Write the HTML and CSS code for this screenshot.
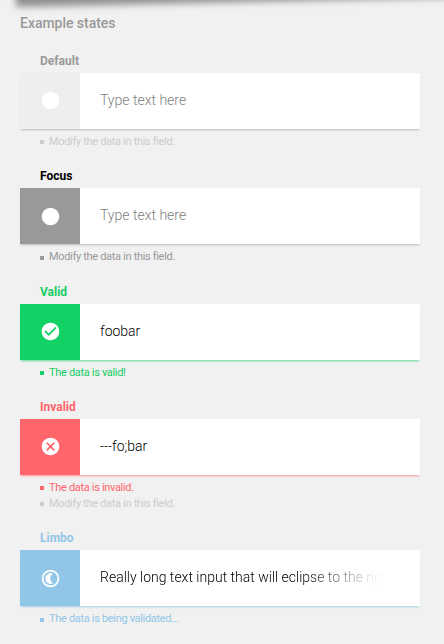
FILE: index.html
```html
<!DOCTYPE html>
<html lang="en">
<head>
<meta charset="utf-8">
<title>Example states</title>
<link rel="stylesheet" href="styles.css">
</head>
<body>
<div class="shadow-clip"><div class="top-shadow"></div></div>
<main class="states">
  <h1 class="title">Example states</h1>

  <section class="group default">
    <label class="label">Default</label>
    <div class="field">
      <div class="status"><svg class="icon" viewBox="0 0 24 24"><circle cx="12" cy="12" r="10"/></svg></div>
      <div class="value placeholder">Type text here</div>
    </div>
    <ul class="hints"><li>Modify the data in this field.</li></ul>
  </section>

  <section class="group focus">
    <label class="label">Focus</label>
    <div class="field">
      <div class="status"><svg class="icon" viewBox="0 0 24 24"><circle cx="12" cy="12" r="10"/></svg></div>
      <div class="value placeholder">Type text here</div>
    </div>
    <ul class="hints"><li>Modify the data in this field.</li></ul>
  </section>

  <section class="group valid">
    <label class="label">Valid</label>
    <div class="field">
      <div class="status"><svg class="icon" viewBox="0 0 24 24"><path d="M12 2C6.48 2 2 6.48 2 12s4.48 10 10 10 10-4.48 10-10S17.52 2 12 2zm-2 15l-5-5 1.41-1.41L10 14.17l7.59-7.59L19 8l-9 9z"/></svg></div>
      <div class="value">foobar</div>
    </div>
    <ul class="hints"><li>The data is valid!</li></ul>
  </section>

  <section class="group invalid">
    <label class="label">Invalid</label>
    <div class="field">
      <div class="status"><svg class="icon" viewBox="0 0 24 24"><path d="M12 2C6.47 2 2 6.47 2 12s4.47 10 10 10 10-4.47 10-10S17.53 2 12 2zm5 13.59L15.59 17 12 13.41 8.41 17 7 15.59 10.59 12 7 8.41 8.41 7 12 10.59 15.59 7 17 8.41 13.41 12 17 15.59z"/></svg></div>
      <div class="value">---fo;bar</div>
    </div>
    <ul class="hints"><li>The data is invalid.</li><li class="muted">Modify the data in this field.</li></ul>
  </section>

  <section class="group limbo">
    <label class="label">Limbo</label>
    <div class="field">
      <div class="status"><svg class="icon" viewBox="0 0 24 24"><circle class="ring" cx="12" cy="12" r="9"/><path d="M12.2 5.8A6.2 6.2 0 0 0 12.2 18.2Q13.6 18 14.7 17.3Q11.6 15.3 11.6 12T14.7 6.7Q13.6 6 12.2 5.8z"/></svg></div>
      <div class="value">Really long text input that will eclipse to the right</div>
    </div>
    <ul class="hints"><li>The data is being validated...</li></ul>
  </section>
</main>
</body>
</html>
```

FILE: styles.css
```css
* { box-sizing: border-box; }

body {
  margin: 0;
  height: 644px;
  overflow: hidden;
  position: relative;
  background: #f1f1f1;
  font-family: Roboto, "Liberation Sans", sans-serif;
  color: #000;
}

.shadow-clip {
  position: absolute;
  top: 0;
  left: 0;
  width: 100%;
  height: 24px;
  overflow: hidden;
}

/* Tilted shadow cast by the panel above */
.top-shadow {
  width: 480px;
  height: 40px;
  margin: -33px 0 0 16px;
  background: #909090;
  filter: blur(3.5px);
  transform: rotate(-1.25deg);
  transform-origin: 0 100%;
}

.states {
  position: relative;
  padding: 15px 24px 0 20px;
}

.title {
  margin: 0 0 37.8px;
  font-size: 14px;
  font-weight: 500;
  line-height: 16px;
  letter-spacing: -.03px;
  color: #999;
  height: 0;
}

.group { margin-bottom: 23.4px; }

.label {
  display: block;
  height: 20px;
  padding-left: 20px;
  font-size: 12px;
  font-weight: 700;
  line-height: 16px;
  color: var(--label);
}

.field {
  display: flex;
  width: 400px;
  height: 56px;
  background: #fff;
  box-shadow: 0 2px 2px -1px var(--shadow);
}

.status {
  flex: none;
  display: flex;
  align-items: center;
  justify-content: center;
  width: 60px;
  background: var(--accent);
}

.icon {
  width: 21px;
  height: 21px;
  margin-left: 1px;
  fill: #fff;
}

.ring {
  fill: none;
  stroke: #fff;
  stroke-width: 2;
}

.value {
  flex: 1;
  min-width: 0;
  margin: 0 0 0 20px;
  font-size: 14px;
  font-weight: 300;
  line-height: 55px;
  white-space: nowrap;
}

.placeholder { color: #808080; }

.hints {
  list-style: none;
  margin: 0 0 -5px;
  padding: 5px 0 0 20px;
  color: var(--hint);
}

.hints li {
  display: flex;
  align-items: center;
  height: 16px;
  font-size: 11px;
  line-height: 16px;
  letter-spacing: -.32px;
}

.hints li::before {
  content: "";
  width: 4px;
  height: 4px;
  margin: 1px 5px 0 0;
  background: currentColor;
}

.hints .muted { color: #ccc; }

.default { --label: #999; --accent: #eee; --hint: #ccc; --shadow: rgba(0, 0, 0, .24); }
.focus { --label: #000; --accent: #999; --hint: #999; --shadow: rgba(0, 0, 0, .24); }
.valid { --label: #13ce66; --accent: #13d265; --hint: #13ce66; --shadow: rgba(19, 210, 101, .65); }
.invalid { --label: #ff666b; --accent: #ff666b; --hint: #ff666b; --shadow: rgba(255, 102, 107, .65); }
.limbo { --label: #91c6e8; --accent: #91c6e8; --hint: #91c6e8; --shadow: rgba(145, 198, 232, .75); }

.limbo .value {
  -webkit-mask-image: linear-gradient(to right, #000 200px, transparent 281px);
  mask-image: linear-gradient(to right, #000 200px, transparent 281px);
}
```
